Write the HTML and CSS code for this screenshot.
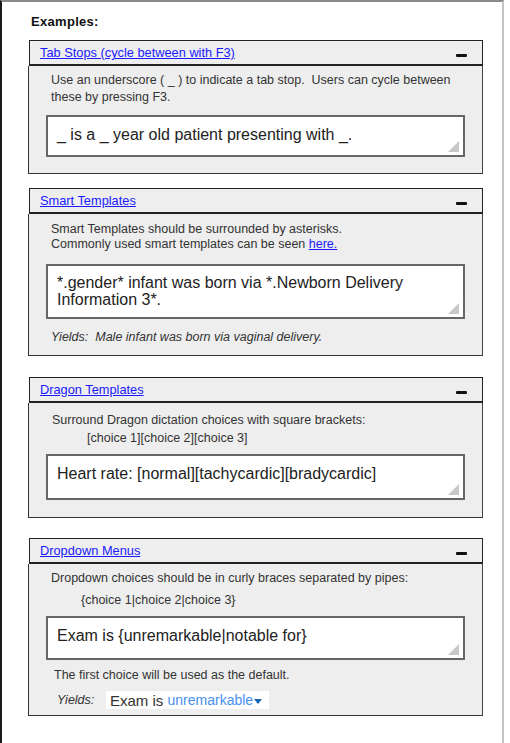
FILE: index.html
```html
<!DOCTYPE html>
<html>
<head>
<meta charset="utf-8">
<link rel="stylesheet" href="styles.css">
</head>
<body>
<div class="frame">
  <div class="title">Examples:</div>

  <section class="panel p1">
    <div class="head"><a class="link" href="#">Tab Stops (cycle between with F3)</a><span class="minus"></span></div>
    <div class="body">
      <p class="txt">Use an underscore ( _ ) to indicate a tab stop.&nbsp; Users can cycle between<br>these by pressing F3.</p>
      <div class="area a1">_ is a _ year old patient presenting with _.<span class="grip"></span></div>
    </div>
  </section>

  <section class="panel p2">
    <div class="head"><a class="link" href="#">Smart Templates</a><span class="minus"></span></div>
    <div class="body">
      <p class="txt">Smart Templates should be surrounded by asterisks.<br>Commonly used smart templates can be seen <a class="link inl" href="#">here.</a></p>
      <div class="area a2">*.gender* infant was born via *.Newborn Delivery<br>Information 3*.<span class="grip"></span></div>
      <p class="yields">Yields:&nbsp; Male infant was born via vaginal delivery.</p>
    </div>
  </section>

  <section class="panel p3">
    <div class="head"><a class="link" href="#">Dragon Templates</a><span class="minus"></span></div>
    <div class="body">
      <p class="txt">Surround Dragon dictation choices with square brackets:<br><span class="ind">[choice 1][choice 2][choice 3]</span></p>
      <div class="area a3">Heart rate: [normal][tachycardic][bradycardic]<span class="grip"></span></div>
    </div>
  </section>

  <section class="panel p4">
    <div class="head"><a class="link" href="#">Dropdown Menus</a><span class="minus"></span></div>
    <div class="body">
      <p class="txt">Dropdown choices should be in curly braces separated by pipes:<br><span class="ind2">{choice 1|choice 2|choice 3}</span></p>
      <div class="area a4">Exam is {unremarkable|notable for}<span class="grip"></span></div>
      <p class="note">The first choice will be used as the default.</p>
      <div class="yrow">
        <span class="ylabel">Yields:</span>
        <span class="ybox">Exam is <span class="choice">unremarkable</span><span class="caret"></span></span>
      </div>
    </div>
  </section>
</div>
</body>
</html>
```

FILE: styles.css
```css
* { box-sizing: border-box; }
html, body { margin: 0; padding: 0; background: #fff; }
body { font-family: "Liberation Sans", Arial, sans-serif; color: #333; }

.frame {
  width: 504px;
  height: 743px;
  border-left: 2px solid #1a1a1a;
  border-top: 2px solid #8a8a8a;
  border-right: 2px solid #c4c4c4;
  padding: 10px 0 0 26px;
  display: flex;
  flex-direction: column;
  align-items: flex-start;
}

.title {
  font-size: 13px;
  font-weight: bold;
  color: #111;
  height: 20px;
  line-height: 20px;
  padding-left: 3px;
  margin-bottom: 8px;
  letter-spacing: 0.3px;
}

.panel { width: 455px; display: flex; flex-direction: column; }
.p2 { margin-top: 14px; }
.p3 { margin-top: 21px; }
.p4 { margin-top: 20px; }

.head {
  height: 26px;
  margin-left: 1px;
  border: 1px solid #222;
  border-bottom: 2px solid #222;
  background: #eeeeee;
  display: flex;
  align-items: center;
  justify-content: space-between;
  padding: 0 15px 0 10px;
}

.link { color: #1a1aff; text-decoration: underline; font-size: 12.8px; }
.link.inl { font-size: inherit; }

.minus {
  width: 11px;
  height: 3px;
  background: #111;
  border-radius: 1px;
  margin-top: 6px;
}

.body {
  background: #eeeeee;
  border: 1px solid #333;
  border-top: none;
  border-right-color: #444;
  display: flex;
  flex-direction: column;
  align-items: flex-start;
  padding: 0 17px;
}

.txt { margin: 0; font-size: 12.5px; color: #333; padding-left: 5px; white-space: nowrap; }
.p1 .body { padding-top: 6px; padding-bottom: 16px; }
.p1 .txt { line-height: 17px; }
.p2 .body { padding-top: 8px; padding-bottom: 10px; }
.p2 .txt { line-height: 15px; }
.p3 .body { padding-top: 8px; padding-bottom: 17px; }
.p3 .txt { line-height: 18px; padding-left: 6px; }
.p4 .body { padding-top: 3px; padding-bottom: 6px; }
.p4 .txt { line-height: 22px; }

.ind { padding-left: 35px; }
.ind2 { padding-left: 30px; }

.area {
  position: relative;
  width: 419px;
  background: #fff;
  border: 2px solid #666;
  font-size: 16px;
  color: #222;
  padding: 8px 9px 0 9px;
  line-height: 20px;
}
.a1 { height: 42px; margin-top: 9px; }
.a2 { height: 55px; margin-top: 12px; padding-top: 8px; line-height: 17px; }
.a3 { height: 46px; margin-top: 7px; }
.a4 { height: 44px; margin-top: 5px; }

.grip {
  position: absolute;
  right: 4px;
  bottom: 3px;
  width: 0;
  height: 0;
  border-left: 11px solid transparent;
  border-bottom: 11px solid #c8c8c8;
}

.yields {
  margin: 10px 0 0 0;
  padding-left: 5px;
  font-size: 12.5px;
  line-height: 16px;
  font-style: italic;
  color: #333;
}

.note { margin: 7px 0 0 0; padding-left: 8px; font-size: 12.5px; line-height: 16px; color: #333; }

.yrow { margin-top: 8px; display: flex; align-items: center; height: 18px; padding-left: 11px; }
.ylabel { font-size: 12.5px; font-style: italic; color: #333; width: 49px; }
.ybox {
  background: #fff;
  height: 18px;
  width: 163px;
  display: flex;
  align-items: center;
  padding-left: 4px;
  font-size: 15px;
  color: #333;
  white-space: pre;
}
.choice { color: #4a8ff0; font-size: 14px; }
.caret {
  width: 0; height: 0;
  border-left: 4px solid transparent;
  border-right: 4px solid transparent;
  border-top: 5px solid #1565b5;
  margin-left: 1px;
  margin-top: 2px;
}
```
